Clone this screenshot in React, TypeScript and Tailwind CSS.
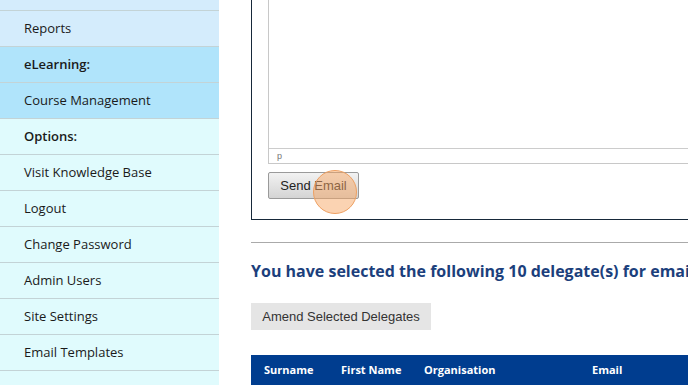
import React from "react";

const rows: { label: string; bold?: boolean; bg: string }[] = [
  { label: "Reports Library", bg: "bg-[#d4ecfc]" },
  { label: "Reports", bg: "bg-[#d4ecfc]" },
  { label: "eLearning:", bold: true, bg: "bg-[#b0e4fb]" },
  { label: "Course Management", bg: "bg-[#b0e4fb]" },
  { label: "Options:", bold: true, bg: "bg-[#e0fbfd]" },
  { label: "Visit Knowledge Base", bg: "bg-[#e0fbfd]" },
  { label: "Logout", bg: "bg-[#e0fbfd]" },
  { label: "Change Password", bg: "bg-[#e0fbfd]" },
  { label: "Admin Users", bg: "bg-[#e0fbfd]" },
  { label: "Site Settings", bg: "bg-[#e0fbfd]" },
  { label: "Email Templates", bg: "bg-[#e0fbfd]" },
  { label: "", bg: "bg-[#e0fbfd]" },
];

export default function App() {
  return (
    <div className="w-[688px] h-[385px] overflow-hidden bg-white flex" style={{ fontFamily: '"Open Sans", "Noto Sans", sans-serif' }}>
      <div className="w-[219px] shrink-0 -mt-[25px] flex flex-col">
        {rows.map((r, i) => (
          <div
            key={i}
            className={`${r.bg} h-[36px] shrink-0 border-b border-[#c3d3d6] pl-[24px] flex items-center text-[13px] text-[#1a1a1a] ${r.bold ? "font-semibold" : ""}`}
          >
            {r.label}
          </div>
        ))}
      </div>
      <div className="flex-1 pl-[32px] overflow-hidden">
        <div className="w-[700px]">
          <div className="relative border-l border-b border-[#17293a] pl-[16px] pb-[20px]">
            <div className="border-l border-b border-[#c8c8c8]">
              <div className="h-[149px] border-b border-[#cccccc]"></div>
              <div className="h-[14px] pl-[8px] text-[9px] leading-[14px] text-[#777]" style={{ fontFamily: '"Liberation Sans", Arial, sans-serif' }}>
                p
              </div>
            </div>
            <button
              className="mt-[8px] h-[27px] w-[91px] border border-[#9a9a9a] rounded-[2px] bg-gradient-to-b from-[#f2f2f2] to-[#d4d4d4] text-[13px] text-[#222] text-center"
              style={{ fontFamily: '"Liberation Sans", Arial, sans-serif' }}
            >
              Send Email
            </button>
            <div className="absolute left-[61px] top-[170px] w-[44px] h-[44px] rounded-full bg-[#f7a866]/50 border border-[#eea062]"></div>
          </div>
          <div className="mt-[22px] border-t border-[#aaaaaa]"></div>
          <div className="mt-[16px] text-[16px] font-bold text-[#1c3f7c] whitespace-nowrap leading-[24px]">
            You have selected the following 10 delegate(s) for email
          </div>
          <button
            className="mt-[20px] h-[27px] w-[180px] bg-[#e5e5e5] text-[13px] text-[#333] text-center"
            style={{ fontFamily: '"Liberation Sans", Arial, sans-serif' }}
          >
            Amend Selected Delegates
          </button>
          <div className="mt-[25px] h-[30px] bg-[#003d8f] flex items-center text-white text-[11px] font-bold">
            <div className="pl-[13px] w-[90px]">Surname</div>
            <div className="w-[83px]">First Name</div>
            <div className="w-[168px]">Organisation</div>
            <div>Email</div>
          </div>
        </div>
      </div>
    </div>
  );
}
